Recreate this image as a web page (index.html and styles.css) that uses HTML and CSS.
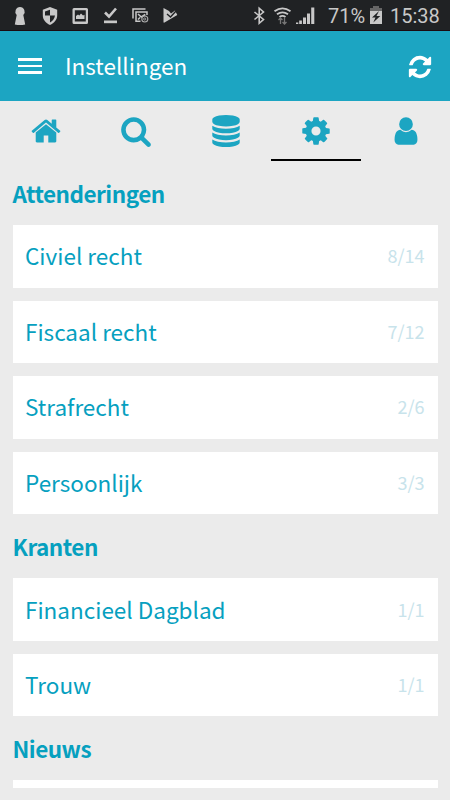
FILE: index.html
```html
<!DOCTYPE html>
<html lang="nl">
<head>
<meta charset="utf-8">
<title>Instellingen</title>
<link rel="stylesheet" href="styles.css">
</head>
<body>
<div class="status">
  <svg class="status-left" width="190" height="30" viewBox="0 0 190 30" fill="#c8c8c8">
    <path d="M20 7a4.700 4.700 0 0 1 3.300 8l1.900 9.500q-5.200 1-10.400 0L16.700 15A4.700 4.700 0 0 1 20 7z"/>
    <path fill-rule="evenodd" d="M50 7l7.200 2.800v5.500c0 4.500-3 7.800-7.200 9.700-4.200-1.900-7.200-5.200-7.200-9.700V9.800zM50 9.800l-5 1.800v4h5zM50 15.600v6.800c2.500-1.300 4.500-3.500 5-6.800z"/>
    <path fill-rule="evenodd" d="M74 8h12.500q1.500 0 1.500 1.500v13q0 1.500-1.500 1.500H74q-1.500 0-1.500-1.500v-13Q72.500 8 74 8zm.8 2.300v11.300h11V10.300z"/>
    <path d="M76 19v-3l2-1.500 1.300 1 1.700-2 2 2 1.500-.8V19z"/>
    <path d="M105 12.500l4 4 7-8" fill="none" stroke="#c8c8c8" stroke-width="2.600"/>
    <path d="M104 20.500h13v2.700h-13z"/>
    <path d="M133 18.500V9h12.500M147 15v-3h-11v9.200h4.500M138 14l3.300 3 4-2.500M138 19.500l2-2" fill="none" stroke="#c8c8c8" stroke-width="1.500"/>
    <circle cx="144.800" cy="19" r="3" fill="none" stroke="#aaa" stroke-width="1.100"/>
    <circle cx="144.700" cy="19" r="1.100" fill="none" stroke="#aaa" stroke-width=".9"/>
    <path d="M163.500 8l5.500 3 2 2.500 4-3 2.300 4.500-12.800 7.500q-1 .5-1-.6z"/>
    <path d="M167 14l3.500 3 5.500-6" fill="none" stroke="#202224" stroke-width="1.400"/>
  </svg>
  <svg class="status-right" width="68" height="30" viewBox="0 0 68 30" fill="#c8c8c8">
    <path d="M1.500 12l9 7.500-4.300 3.800V8.200l4.300 3.800-9 7.500" fill="none" stroke="#c8c8c8" stroke-width="1.600"/>
    <g fill="none" stroke="#c8c8c8" stroke-width="1.800"><path d="M21.500 11.300q8-6 16 0M24 14.300q5.500-4 11 0M26.500 17q3-2.200 6 0"/></g>
    <path d="M27.500 24V18M25.500 20l2-2 2 2M31.500 18v6M29.500 22l2 2 2-2" fill="none" stroke="#777" stroke-width="1.300"/>
    <path d="M46.200 20.500h2.700V24h-2.700zM50 17.500h3V24h-3zM54 13.500h3V24h-3zM58.200 7.500h3.100V24h-3.100zM43 22.500h2.300V24H43z"/>
  </svg>
  <span class="percent">71%</span>
  <svg class="battery" width="14" height="20" viewBox="0 0 14 20"><path d="M4 1h6v2h3v4H1V3h3z" fill="#666"/><path d="M1 6h12v13H1z" fill="#c8c8c8"/><path d="M10 6l-7 6.500h3.500L4.300 17.500l7-6.500H7.500z" fill="#202224"/></svg>
  <span class="clock">15:38</span>
</div>
<header class="bar">
  <div class="menu"><i></i><i></i><i></i></div>
  <h1 class="title">Instellingen</h1>
  <svg class="refresh" viewBox="0 0 1792 1792"><path d="M1639 1056q0 5-1 7-64 268-268 434.500t-478 166.500q-146 0-282.500-55t-243.500-157l-129 129q-19 19-45 19t-45-19-19-45v-448q0-26 19-45t45-19h448q26 0 45 19t19 45-19 45l-137 137q71 66 161 102t187 36q134 0 250-65t186-179q11-17 53-117 8-23 30-23h192q13 0 22.500 9.500t9.500 22.500zm25-800v448q0 26-19 45t-45 19h-448q-26 0-45-19t-19-45 19-45l138-138q-148-137-349-137-134 0-250 65t-186 179q-11 17-53 117-8 23-30 23h-199q-13 0-22.500-9.500t-9.500-22.500v-7q65-268 270-434.500t480-166.500q146 0 284 55.500t245 156.500l130-129q19-19 45-19t45 19 19 45z"/></svg>
</header>
<nav class="tabs">
  <div class="tab"><svg viewBox="0 0 1792 1792"><path d="M1472 992v480q0 26-19 45t-45 19h-384v-384h-256v384h-384q-26 0-45-19t-19-45v-480q0-1 .5-3t.5-3l575-474 575 474q1 2 1 6zm223-69l-62 74q-8 9-21 11h-3q-13 0-21-7l-692-577-692 577q-12 8-24 7-13-2-21-11l-62-74q-8-10-7-23.500t11-21.500l719-599q32-26 76-26t76 26l244 204v-195q0-14 9-23t23-9h192q14 0 23 9t9 23v408l219 182q10 8 11 21.500t-7 23.500z"/></svg></div>
  <div class="tab"><svg viewBox="0 0 1792 1792"><path d="M1216 832q0-185-131.500-316.500t-316.500-131.500-316.500 131.500-131.500 316.500 131.500 316.500 316.500 131.500 316.500-131.500 131.500-316.500zm512 832q0 52-38 90t-90 38q-54 0-90-38l-343-342q-179 124-399 124-143 0-273.500-55.500t-225-150-150-225-55.500-273.500 55.500-273.500 150-225 225-150 273.500-55.500 273.500 55.500 225 150 150 225 55.500 273.500q0 220-124 399l343 343q37 37 37 90z"/></svg></div>
  <div class="tab"><svg viewBox="0 0 1792 1792"><path d="M896 768q237 0 443-43t325-127v170q0 69-103 128t-280 93.500-385 34.500-385-34.500-280-93.500-103-128v-170q119 84 325 127t443 43zm0 768q237 0 443-43t325-127v170q0 69-103 128t-280 93.500-385 34.500-385-34.500-280-93.500-103-128v-170q119 84 325 127t443 43zm0-384q237 0 443-43t325-127v170q0 69-103 128t-280 93.500-385 34.500-385-34.500-280-93.500-103-128v-170q119 84 325 127t443 43zm0-1152q208 0 385 34.500t280 93.500 103 128v128q0 69-103 128t-280 93.500-385 34.500-385-34.500-280-93.500-103-128v-128q0-69 103-128t280-93.500 385-34.500z"/></svg></div>
  <div class="tab active"><svg viewBox="0 0 1792 1792"><path d="M1152 896q0-106-75-181t-181-75-181 75-75 181 75 181 181 75 181-75 75-181zm512-109v222q0 12-8 23t-20 13l-185 28q-19 54-39 91 35 50 107 138 10 12 10 25t-9 23q-27 37-99 108t-94 71q-12 0-26-9l-138-108q-44 23-91 38-16 136-29 186-7 28-36 28h-222q-14 0-24.500-8.500t-11.500-21.500l-28-184q-49-16-90-37l-141 107q-10 9-25 9-14 0-25-11-126-114-165-168-7-10-7-23 0-12 8-23 15-21 51-66.500t54-70.500q-27-50-41-99l-183-27q-13-2-21-12.500t-8-23.500v-222q0-12 8-23t19-13l186-28q14-46 39-92-40-57-107-138-10-12-10-24 0-10 9-23 26-36 98.500-107.500t94.500-71.500q13 0 26 10l138 107q44-23 91-38 16-136 29-186 7-28 36-28h222q14 0 24.500 8.500t11.500 21.500l28 184q49 16 90 37l142-107q9-9 24-9 13 0 25 10 129 119 165 170 7 8 7 22 0 12-8 23-15 21-51 66.500t-54 70.500q26 50 41 98l183 28q13 2 21 12.500t8 23.500z"/></svg></div>
  <div class="tab"><svg viewBox="0 0 1792 1792"><path d="M1536 1399q0 109-62.500 187t-150.500 78h-854q-88 0-150.500-78t-62.500-187q0-85 8.500-160.500t31.500-152 58.500-131 94-89 134.500-34.500q131 128 313 128t313-128q76 0 134.500 34.500t94 89 58.500 131 31.500 152 8.500 160.500zm-256-887q0 159-112.500 271.500t-271.500 112.500-271.500-112.500-112.500-271.500 112.500-271.500 271.500-112.500 271.500 112.500 112.500 271.500z"/></svg></div>
</nav>
<main class="list">
  <h2 class="group">Attenderingen</h2>
  <div class="row"><span>Civiel recht</span><span class="count">8/14</span></div>
  <div class="row"><span>Fiscaal recht</span><span class="count">7/12</span></div>
  <div class="row"><span>Strafrecht</span><span class="count">2/6</span></div>
  <div class="row"><span>Persoonlijk</span><span class="count">3/3</span></div>
  <h2 class="group">Kranten</h2>
  <div class="row"><span>Financieel Dagblad</span><span class="count">1/1</span></div>
  <div class="row"><span>Trouw</span><span class="count">1/1</span></div>
  <h2 class="group">Nieuws</h2>
  <div class="row cut"></div>
</main>
</body>
</html>
```
FILE: styles.css
```css
* { box-sizing: border-box; }
html, body { height: 800px; overflow: hidden; }
body {
  margin: 0;
  background: #ebebeb;
  font-family: "Noto Sans CJK SC", sans-serif;
  color: #06a0bf;
}
svg { display: block; flex: none; }

.status {
  display: flex;
  align-items: center;
  height: 31px;
  background: #202224;
  border-bottom: 1px solid #1b0a10;
  font: 20px/30px Roboto, sans-serif;
  color: #c8c8c8;
}
.status-left { margin-right: 63px; }
.percent { width: 39px; margin-left: 7px; padding-top: 2px; }
.battery { margin-left: 2px; }
.clock { margin-left: 7px; padding-top: 2px; }

.bar {
  display: flex;
  align-items: center;
  height: 70px;
  padding: 0 17px 0 18px;
  background: #1ca5c2;
  color: #fff;
}
.menu { display: grid; gap: 4px; width: 24px; margin-right: 23px; }
.menu i { height: 2.500px; background: #fff; }
.title { flex: 1; margin: 0; padding-bottom: 2px; font-size: 22.500px; font-weight: 400; line-height: 32px; }
.refresh { width: 26px; height: 26px; margin-top: 1px; fill: #fff; }

.tabs { display: flex; height: 60px; padding-left: 1px; overflow: hidden; }
.tab {
  flex: 0 0 90px;
  height: 60px;
  padding-top: 14px;
  border-bottom: 2px solid transparent;
}
.tab svg { width: 32px; height: 32px; margin: 0 auto; fill: #1ca5c2; }
.tab.active { border-color: #000; }

.list { padding: 0 12.500px; }
.group {
  height: 64px;
  margin: 0;
  padding-top: 16px;
  font-size: 22.500px;
  font-weight: 700;
  line-height: 32px;
  letter-spacing: -0.500px;
}
.row {
  display: flex;
  align-items: center;
  justify-content: space-between;
  height: 62.500px;
  margin-bottom: 13.100px;
  padding: 0 13px 2px 12.500px;
  background: #fff;
  font-size: 22.500px;
  line-height: 32px;
}
.row + .group { margin-top: -13.100px; }
.count { font-size: 18px; color: #c8e3eb; }
.cut { height: 7.500px; }
```
